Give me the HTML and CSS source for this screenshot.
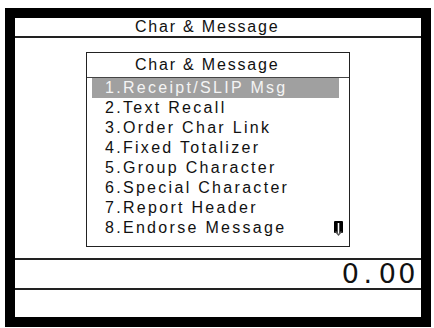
FILE: index.html
```html
<!DOCTYPE html>
<html>
<head>
<meta charset="utf-8">
<link rel="stylesheet" href="styles.css">
</head>
<body>
<div class="screen">
  <div class="title">Char &amp; Message</div>
  <div class="main">
    <div class="menu">
      <div class="menu-title">Char &amp; Message</div>
      <ul class="items">
        <li class="item selected">1.Receipt/SLIP Msg</li>
        <li class="item">2.Text Recall</li>
        <li class="item">3.Order Char Link</li>
        <li class="item">4.Fixed Totalizer</li>
        <li class="item">5.Group Character</li>
        <li class="item">6.Special Character</li>
        <li class="item">7.Report Header</li>
        <li class="item">8.Endorse Message</li>
      </ul>
      <svg class="scroll" width="11" height="16" viewBox="0 0 11 16">
        <rect x="1" y="0" width="9" height="12" rx="1" fill="#000"/>
        <line x1="5.5" y1="2" x2="5.5" y2="13" stroke="#fff" stroke-width="1.6"/>
        <polyline points="2.5,10.5 5.5,14 8.5,10.5" fill="none" stroke="#555" stroke-width="1.4"/>
      </svg>
    </div>
  </div>
  <div class="amount">0<span class="dot">.</span>00</div>
  <div class="footer"></div>
</div>
</body>
</html>
```

FILE: styles.css
```css
html, body {
  margin: 0;
  padding: 0;
  background: #fff;
}

body {
  font-family: "Liberation Sans", Arial, sans-serif;
  color: #111;
}

.screen {
  margin: 8px 0 0 5px;
  width: 406px;
  height: 299px;
  border: 10px solid #000;
  display: flex;
  flex-direction: column;
  background: #fff;
}

.title {
  height: 18px;
  line-height: 18px;
  font-size: 16px;
  letter-spacing: 1.8px;
  padding-left: 120px;
  border-bottom: 2px solid #222;
}

.main {
  height: 222px;
  border-bottom: 2px solid #222;
  padding: 14px 0 0 71px;
  box-sizing: border-box;
}

.menu {
  position: relative;
  width: 264px;
  height: 195px;
  border: 1px solid #222;
  box-sizing: border-box;
}

.menu-title {
  height: 24px;
  line-height: 24px;
  font-size: 16px;
  letter-spacing: 1.8px;
  padding-left: 48px;
  border-bottom: 1px solid #444;
}

.items {
  list-style: none;
  margin: 0;
  padding: 0;
}

.item {
  margin: 0 10px 0 5px;
  height: 20px;
  line-height: 20px;
  font-size: 16px;
  letter-spacing: 2.3px;
  padding-left: 13px;
  white-space: nowrap;
}

.item.selected {
  background: #a0a0a0;
  color: #f4f4f4;
}

.scroll {
  position: absolute;
  right: 5px;
  top: 168px;
}

.amount {
  height: 28px;
  line-height: 28px;
  border-bottom: 2px solid #222;
  text-align: right;
  padding-right: 3px;
  font-family: "DejaVu Sans", sans-serif;
  font-size: 27px;
  letter-spacing: 2.5px;
  color: #111;
}

.dot {
  margin: 0 4px 0 2px;
}

.footer {
  height: 25px;
}
```
